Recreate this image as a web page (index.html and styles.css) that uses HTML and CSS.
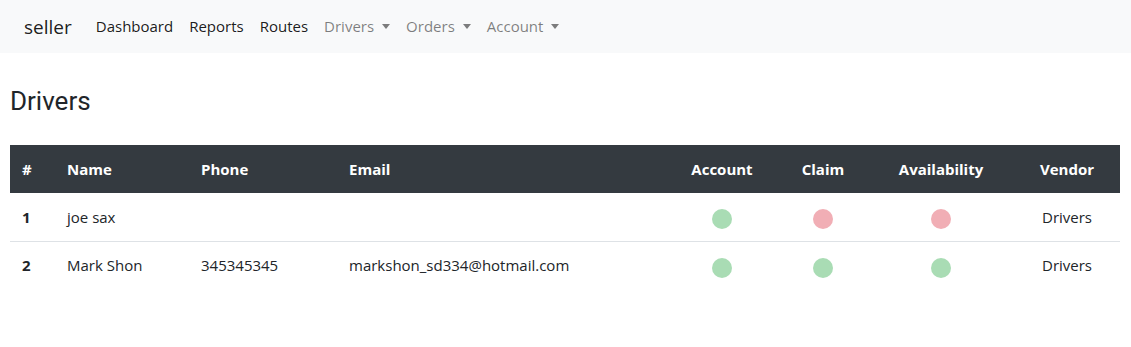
FILE: index.html
```html
<!DOCTYPE html>
<html lang="en">
<head>
<meta charset="utf-8">
<title>Drivers</title>
<link rel="stylesheet" href="styles.css">
</head>
<body>
<nav class="navbar">
  <a class="brand" href="#">seller</a>
  <ul class="nav">
    <li><a class="nav-link dark" href="#">Dashboard</a></li>
    <li><a class="nav-link dark" href="#">Reports</a></li>
    <li><a class="nav-link dark" href="#">Routes</a></li>
    <li><a class="nav-link muted dropdown" href="#">Drivers</a></li>
    <li><a class="nav-link muted dropdown" href="#">Orders</a></li>
    <li><a class="nav-link muted dropdown" href="#">Account</a></li>
  </ul>
</nav>
<main class="content">
  <h3 class="title">Drivers</h3>
  <table class="table">
    <colgroup>
      <col class="c-num"><col class="c-name"><col class="c-phone"><col class="c-email">
      <col class="c-account"><col class="c-claim"><col class="c-avail"><col class="c-vendor">
    </colgroup>
    <thead>
      <tr>
        <th>#</th><th>Name</th><th>Phone</th><th>Email</th>
        <th class="center">Account</th><th class="center">Claim</th><th class="center">Availability</th><th class="center">Vendor</th>
      </tr>
    </thead>
    <tbody>
      <tr>
        <th>1</th><td>joe sax</td><td></td><td></td>
        <td class="center"><span class="dot ok"></span></td>
        <td class="center"><span class="dot bad"></span></td>
        <td class="center"><span class="dot bad"></span></td>
        <td class="center">Drivers</td>
      </tr>
      <tr>
        <th>2</th><td>Mark Shon</td><td>345345345</td><td>markshon_sd334@hotmail.com</td>
        <td class="center"><span class="dot ok"></span></td>
        <td class="center"><span class="dot ok"></span></td>
        <td class="center"><span class="dot ok"></span></td>
        <td class="center">Drivers</td>
      </tr>
    </tbody>
  </table>
</main>
</body>
</html>
```

FILE: styles.css
```css
* { box-sizing: border-box; }
body {
  margin: 0;
  font-family: "Open Sans", "Noto Sans", sans-serif;
  font-size: 15px;
  line-height: 1.5;
  color: #212529;
  background: #fff;
}
a { text-decoration: none; }
.navbar {
  display: flex;
  align-items: center;
  height: 53px;
  padding: 0 24px;
  background: #f8f9fa;
}
.brand {
  font-size: 19px;
  color: rgba(0,0,0,.9);
  margin-right: 16px;
  line-height: 30px;
}
.nav {
  display: flex;
  list-style: none;
  margin: 0;
  padding: 0;
}
.nav-link {
  display: block;
  padding: 8px 8px;
  font-size: 15px;
}
.nav-link.dark { color: rgba(0,0,0,.9); }
.nav-link.muted { color: rgba(0,0,0,.5); }
.dropdown::after {
  content: "";
  display: inline-block;
  margin-left: 8px;
  vertical-align: 3px;
  border-top: 5px solid;
  border-left: 4.5px solid transparent;
  border-right: 4.5px solid transparent;
}
.content { padding: 0 11px 0 10px; }
.title {
  font-family: Roboto, "Open Sans", sans-serif;
  font-weight: 400;
  font-size: 26px;
  line-height: 1.2;
  margin: 33px 0 28px;
}
.table {
  width: 100%;
  border-collapse: collapse;
  table-layout: fixed;
}
.c-num { width: 45px; }
.c-name { width: 134px; }
.c-phone { width: 148px; }
.c-email { width: 329px; }
.c-account { width: 112px; }
.c-claim { width: 90px; }
.c-avail { width: 146px; }
.c-vendor { width: 106px; }
.table th, .table td {
  padding: 12px;
  height: 48px;
  text-align: left;
  vertical-align: middle;
  white-space: nowrap;
}
.table thead th {
  background: #343a40;
  color: #fff;
  font-weight: 700;
}
.table tbody tr + tr th, .table tbody tr + tr td { border-top: 1px solid #dee2e6; }
.table tbody th { font-weight: 700; }
.table .center { text-align: center; }
.dot {
  display: inline-block;
  width: 20px;
  height: 20px;
  border-radius: 50%;
  vertical-align: middle;
  position: relative;
  top: 1px;
}
.dot.ok { background: #a9dcb4; }
.dot.bad { background: #f1aeb5; }
```
